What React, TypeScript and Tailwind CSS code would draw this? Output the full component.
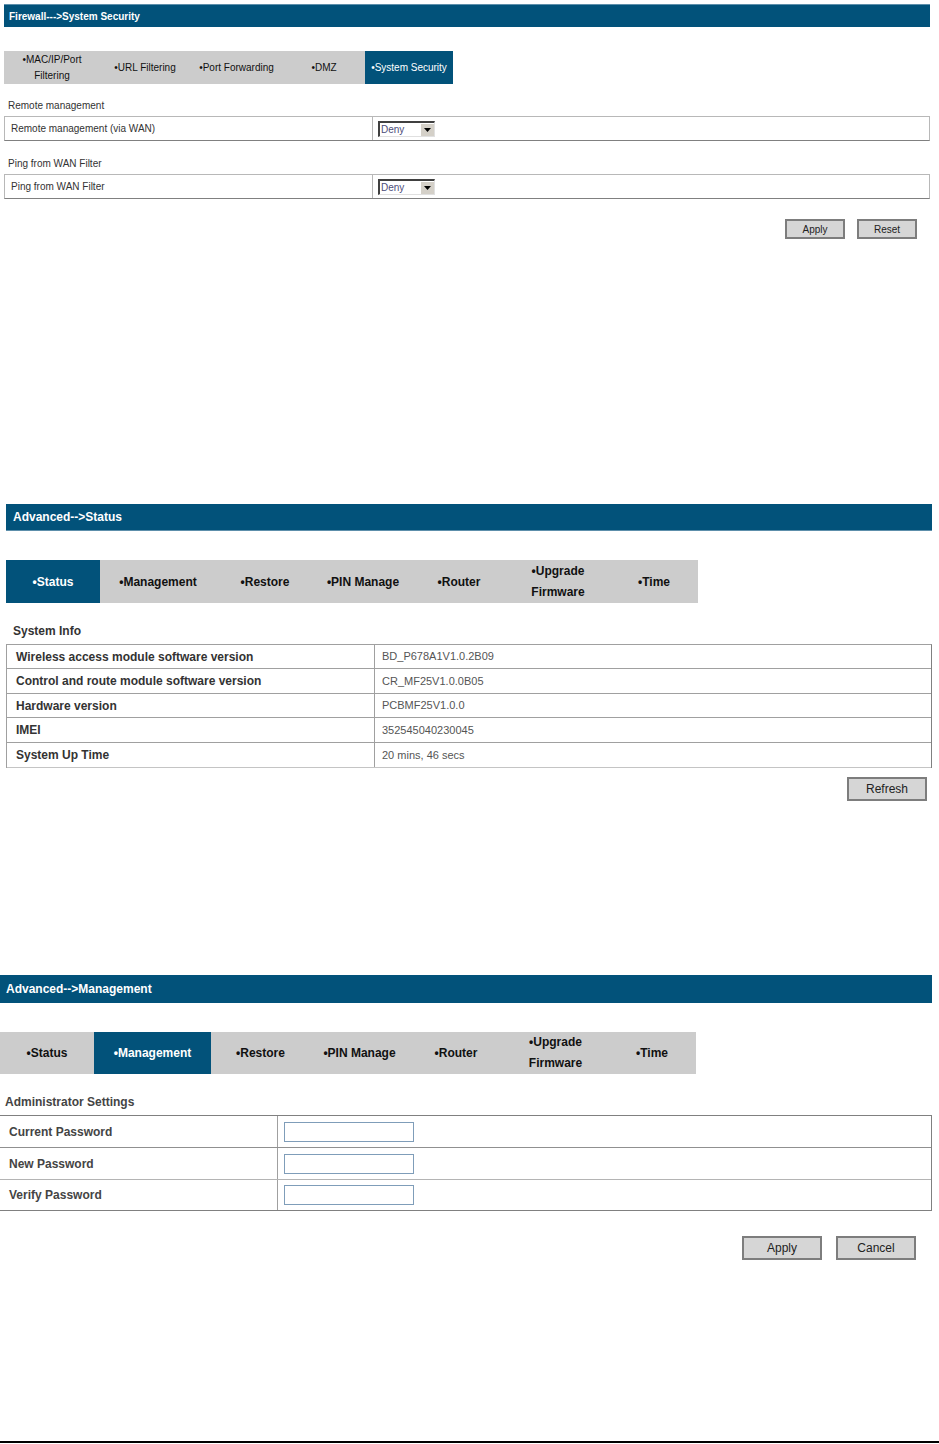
import React from 'react'

type Tab = { label: React.ReactNode; width: number; active?: boolean }

const font = { fontFamily: '"Liberation Sans", Arial, sans-serif' }

const TabBar = ({ tabs, height, size, bold }: { tabs: Tab[]; height: string; size: string; bold?: boolean }) => (
  <div className={`flex bg-[#cccccc] ${height} ${size} ${bold ? 'font-bold' : ''}`}>
    {tabs.map((tab, i) => (
      <div
        key={i}
        style={{ width: tab.width }}
        className={`flex items-center justify-center text-center ${
          tab.active ? 'bg-[#02527a] text-white' : 'text-[#111]'
        }`}
      >
        {tab.label}
      </div>
    ))}
  </div>
)

const DenySelect = () => (
  <div className="flex w-[57px] h-[16px] bg-white border-t-2 border-l-2 border-[#404040] border-r border-b border-r-[#e0e0e0] border-b-[#e0e0e0]">
    <span className="flex-1 text-[10px] leading-[13px] pl-[1px] text-[#4d4d7a]">Deny</span>
    <span className="w-[14px] h-full bg-[#d4d0c8] border-l border-t border-white flex items-center justify-center">
      <svg width="7" height="4" viewBox="0 0 7 4">
        <path d="M0 0h7L3.5 4z" fill="#000" />
      </svg>
    </span>
  </div>
)

const Button = ({ children, className }: { children: React.ReactNode; className: string }) => (
  <button className={`bg-[#d6d6d6] border-2 border-[#7d7d7d] text-[#222] ${className}`}>{children}</button>
)

const FirewallSection = () => {
  const tabs: Tab[] = [
    { label: <span className="leading-[16px]">•MAC/IP/Port<br />Filtering</span>, width: 96 },
    { label: '•URL Filtering', width: 90 },
    { label: '•Port Forwarding', width: 93 },
    { label: '•DMZ', width: 82 },
    { label: '•System Security', width: 88, active: true },
  ]
  const rows = [
    { title: 'Remote management', label: 'Remote management (via WAN)' },
    { title: 'Ping from WAN Filter', label: 'Ping from WAN Filter' },
  ]
  return (
    <section className="pt-[4px] pl-[4px] pr-[9px]">
      <div className="h-[23px] bg-[#02527a] border-t border-[#5d8fab] flex items-center pl-[5px] text-white text-[10px] font-bold">
        Firewall---&gt;System Security
      </div>
      <div className="mt-[24px] w-[449px]">
        <TabBar tabs={tabs} height="h-[33px]" size="text-[10px]" />
      </div>
      {rows.map((r, i) => (
        <div key={i}>
          <div className={`${i === 0 ? 'mt-[14px]' : 'mt-[15px]'} mb-[2px] pl-[4px] text-[10px] leading-[16px] text-[#333]`}>
            {r.title}
          </div>
          <div className="flex h-[25px] border border-[#b8b8b8] border-b-[#808080] text-[10px] text-[#333]">
            <div className="w-[368px] border-r border-[#b8b8b8] flex items-center pl-[6px]">{r.label}</div>
            <div className="flex-1 flex items-center pl-[5px]">
              <DenySelect />
            </div>
          </div>
        </div>
      ))}
      <div className="mt-[20px] flex justify-end gap-[12px] pr-[13px]">
        <Button className="w-[60px] h-[20px] text-[10px]">Apply</Button>
        <Button className="w-[60px] h-[20px] text-[10px]">Reset</Button>
      </div>
    </section>
  )
}

const advancedTabs = (active: string, widths: number[]): Tab[] =>
  [
    '•Status',
    '•Management',
    '•Restore',
    '•PIN Manage',
    '•Router',
    'upgrade',
    '•Time',
  ].map((l, i) => ({
    label:
      l === 'upgrade' ? (
        <span className="leading-[21px]">•Upgrade<br />Firmware</span>
      ) : (
        l
      ),
    width: widths[i],
    active: l === active,
  }))

const StatusSection = () => {
  const rows = [
    { k: 'Wireless access module software version', v: 'BD_P678A1V1.0.2B09', h: 'h-[24px]' },
    { k: 'Control and route module software version', v: 'CR_MF25V1.0.0B05', h: 'h-[25px]' },
    { k: 'Hardware version', v: 'PCBMF25V1.0.0', h: 'h-[24px]' },
    { k: 'IMEI', v: '352545040230045', h: 'h-[25px]' },
    { k: 'System Up Time', v: '20 mins, 46 secs', h: 'h-[25px]' },
  ]
  return (
    <section className="mt-[265px] pl-[6px] pr-[7px]">
      <div className="h-[27px] bg-[#02527a] border-b border-[#5d8fab] flex items-center pl-[7px] text-white text-[12px] font-bold">
        Advanced--&gt;Status
      </div>
      <div className="mt-[29px] w-[692px]">
        <TabBar
          tabs={advancedTabs('•Status', [94, 116, 98, 98, 94, 104, 88])}
          height="h-[43px]"
          size="text-[12px]"
          bold
        />
      </div>
      <div className="mt-[20px] mb-[5px] pl-[7px] text-[12px] leading-[16px] font-bold text-[#333]">System Info</div>
      <div className="border-t border-l border-r border-[#a0a0a0] border-r-[#808080]">
        {rows.map((r, i) => (
          <div key={i} className={`flex ${r.h} border-b ${i === 4 ? 'border-[#c4c4c4]' : 'border-[#a0a0a0]'}`}>
            <div className="w-[368px] border-r border-[#a0a0a0] flex items-center pl-[9px] text-[12px] font-bold text-[#333]">
              {r.k}
            </div>
            <div className="flex-1 flex items-center pl-[7px] text-[11px] text-[#555]">{r.v}</div>
          </div>
        ))}
      </div>
      <div className="mt-[9px] flex justify-end pr-[5px]">
        <Button className="w-[80px] h-[24px] text-[12px]">Refresh</Button>
      </div>
    </section>
  )
}

const ManagementSection = () => {
  const rows = [
    { k: 'Current Password', h: 'h-[32px]', b: 'border-[#909090]' },
    { k: 'New Password', h: 'h-[32px]', b: 'border-[#b4b4b4]' },
    { k: 'Verify Password', h: 'h-[31px]', b: 'border-[#808080]' },
  ]
  return (
    <section className="mt-[174px] pr-[7px]">
      <div className="h-[28px] bg-[#02527a] flex items-center pl-[6px] text-white text-[12px] font-bold">
        Advanced--&gt;Management
      </div>
      <div className="mt-[29px] w-[696px]">
        <TabBar
          tabs={advancedTabs('•Management', [94, 117, 99, 99, 94, 105, 88])}
          height="h-[42px]"
          size="text-[12px]"
          bold
        />
      </div>
      <div className="mt-[20px] mb-[5px] pl-[5px] text-[12px] leading-[16px] font-bold text-[#444]">
        Administrator Settings
      </div>
      <div className="border-t border-r border-[#808080]">
        {rows.map((r, i) => (
          <div key={i} className={`flex ${r.h} border-b ${r.b}`}>
            <div className="w-[278px] border-r border-[#a0a0a0] flex items-center pl-[9px] text-[12px] font-bold text-[#444]">
              {r.k}
            </div>
            <div className="flex-1 flex items-center pl-[6px]">
              <input type="password" className="w-[130px] h-[20px] border border-[#7f9db9] bg-white outline-none" />
            </div>
          </div>
        ))}
      </div>
      <div className="mt-[25px] flex justify-end gap-[14px] pr-[16px]">
        <Button className="w-[80px] h-[24px] text-[12px]">Apply</Button>
        <Button className="w-[80px] h-[24px] text-[12px]">Cancel</Button>
      </div>
    </section>
  )
}

export default function App() {
  return (
    <div className="w-[939px] bg-white" style={font}>
      <FirewallSection />
      <StatusSection />
      <ManagementSection />
      <div className="mt-[181px] h-[2px] bg-black" />
    </div>
  )
}
